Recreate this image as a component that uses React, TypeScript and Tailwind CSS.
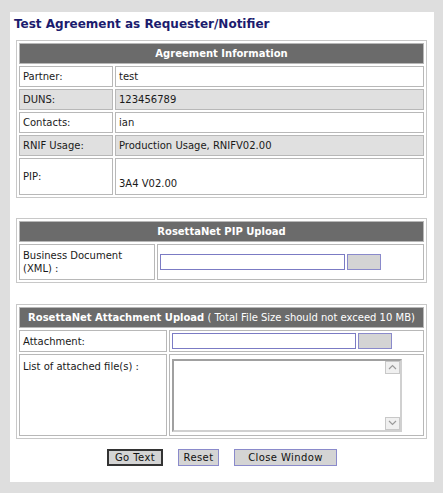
import React from "react";

const font = { fontFamily: '"DejaVu Sans", Verdana, sans-serif' };

function Header({ children }: { children: React.ReactNode }) {
  return (
    <div className="col-span-2 h-[21px] flex items-center justify-center bg-[#6b6b6b] border border-[#b8b8b8] text-white text-[10px]">
      {children}
    </div>
  );
}

function Cell({
  children,
  shade = false,
  className = "",
}: {
  children?: React.ReactNode;
  shade?: boolean;
  className?: string;
}) {
  return (
    <div
      className={`border border-[#b8b8b8] flex items-center text-[10px] leading-[13px] text-[#1a1a1a] ${
        shade ? "bg-[#e0e0e0]" : "bg-white"
      } ${className}`}
    >
      {children}
    </div>
  );
}

function FileField({ width }: { width: string }) {
  return (
    <div className="flex items-center gap-[2px]">
      <div className={`${width} h-[16px] border border-[#7b7bc4] bg-white`} />
      <div className="w-[34px] h-[16px] border border-[#8a8acb] bg-[#d4d4d4]" />
    </div>
  );
}

function Chevron({ up }: { up?: boolean }) {
  return (
    <svg width="9" height="6" viewBox="0 0 9 6">
      <path
        d={up ? "M1 5 L4.5 1.5 L8 5" : "M1 1 L4.5 4.5 L8 1"}
        fill="none"
        stroke="#9a9a9a"
        strokeWidth="1.2"
      />
    </svg>
  );
}

export default function App() {
  const info = [
    { label: "Partner:", value: "test" },
    { label: "DUNS:", value: "123456789", shade: true },
    { label: "Contacts:", value: "ian" },
    { label: "RNIF Usage:", value: "Production Usage, RNIFV02.00", shade: true },
  ];

  return (
    <div className="w-[443px] h-[493px] bg-[#dedede] pt-[12px] pl-[10px]" style={font}>
      <div className="w-[424px] h-[470px] bg-white flex flex-col">
        <h1 className="mt-[4px] ml-[4px] text-[12px] leading-[16px] font-bold text-[#1c1c6e]">
          Test Agreement as Requester/Notifier
        </h1>

        {/* Agreement Information */}
        <div className="mt-[8px] ml-[6px] w-[411px] border border-[#c8c8c8] p-[2px] grid grid-cols-[94px_1fr] gap-[2px]">
          <Header>
            <span className="font-bold">Agreement Information</span>
          </Header>
          {info.map((r) => (
            <React.Fragment key={r.label}>
              <Cell shade={r.shade} className="h-[21px] px-[3px]">{r.label}</Cell>
              <Cell shade={r.shade} className="h-[21px] px-[3px]">{r.value}</Cell>
            </React.Fragment>
          ))}
          <Cell className="h-[37px] px-[3px]">PIP:</Cell>
          <Cell className="h-[37px] px-[3px]">
            <span>
              <br />
              3A4 V02.00
            </span>
          </Cell>
        </div>

        {/* RosettaNet PIP Upload */}
        <div className="mt-[20px] ml-[6px] w-[411px] border border-[#c8c8c8] p-[2px] grid grid-cols-[136px_1fr] gap-[2px]">
          <Header>
            <span className="font-bold">RosettaNet PIP Upload</span>
          </Header>
          <Cell className="h-[36px] px-[3px]">Business Document (XML) :</Cell>
          <Cell className="h-[36px] pl-[2px]">
            <FileField width="w-[185px]" />
          </Cell>
        </div>

        {/* RosettaNet Attachment Upload */}
        <div className="mt-[21px] ml-[6px] w-[411px] border border-[#c8c8c8] p-[2px] grid grid-cols-[148px_1fr] gap-[2px]">
          <Header>
            <span className="font-bold">RosettaNet Attachment Upload</span>
            <span>&nbsp;( Total File Size should not exceed 10 MB)</span>
          </Header>
          <Cell className="h-[22px] px-[3px]">Attachment:</Cell>
          <Cell className="h-[22px] pl-[2px]">
            <FileField width="w-[184px]" />
          </Cell>
          <Cell className="h-[82px] px-[3px] !items-start pt-[5px]">List of attached file(s) :</Cell>
          <Cell className="h-[82px] pl-[2px]">
            <div className="w-[230px] h-[73px] border-2 border-t-[#a0a0a0] border-l-[#a0a0a0] border-b-[#d0d0d0] border-r-[#d0d0d0] bg-white flex justify-end">
              <div className="w-[15px] flex flex-col justify-between">
                <div className="h-[13px] border border-[#c8c8c8] bg-[#f0f0f0] flex items-center justify-center">
                  <Chevron up />
                </div>
                <div className="h-[13px] border border-[#c8c8c8] bg-[#f0f0f0] flex items-center justify-center">
                  <Chevron />
                </div>
              </div>
            </div>
          </Cell>
        </div>

        {/* Buttons */}
        <div className="mt-[10px] flex justify-center gap-[15px] text-[10px] tracking-[0.4px] text-[#111]">
          <button className="w-[56px] h-[17px] bg-[#d4d4d4] border-2 border-[#333] leading-none">
            Go Text
          </button>
          <button className="w-[41px] h-[17px] bg-[#d4d4d4] border border-[#8a8acb] leading-none">
            Reset
          </button>
          <button className="w-[103px] h-[17px] bg-[#d4d4d4] border border-[#8a8acb] leading-none">
            Close Window
          </button>
        </div>
      </div>
    </div>
  );
}
